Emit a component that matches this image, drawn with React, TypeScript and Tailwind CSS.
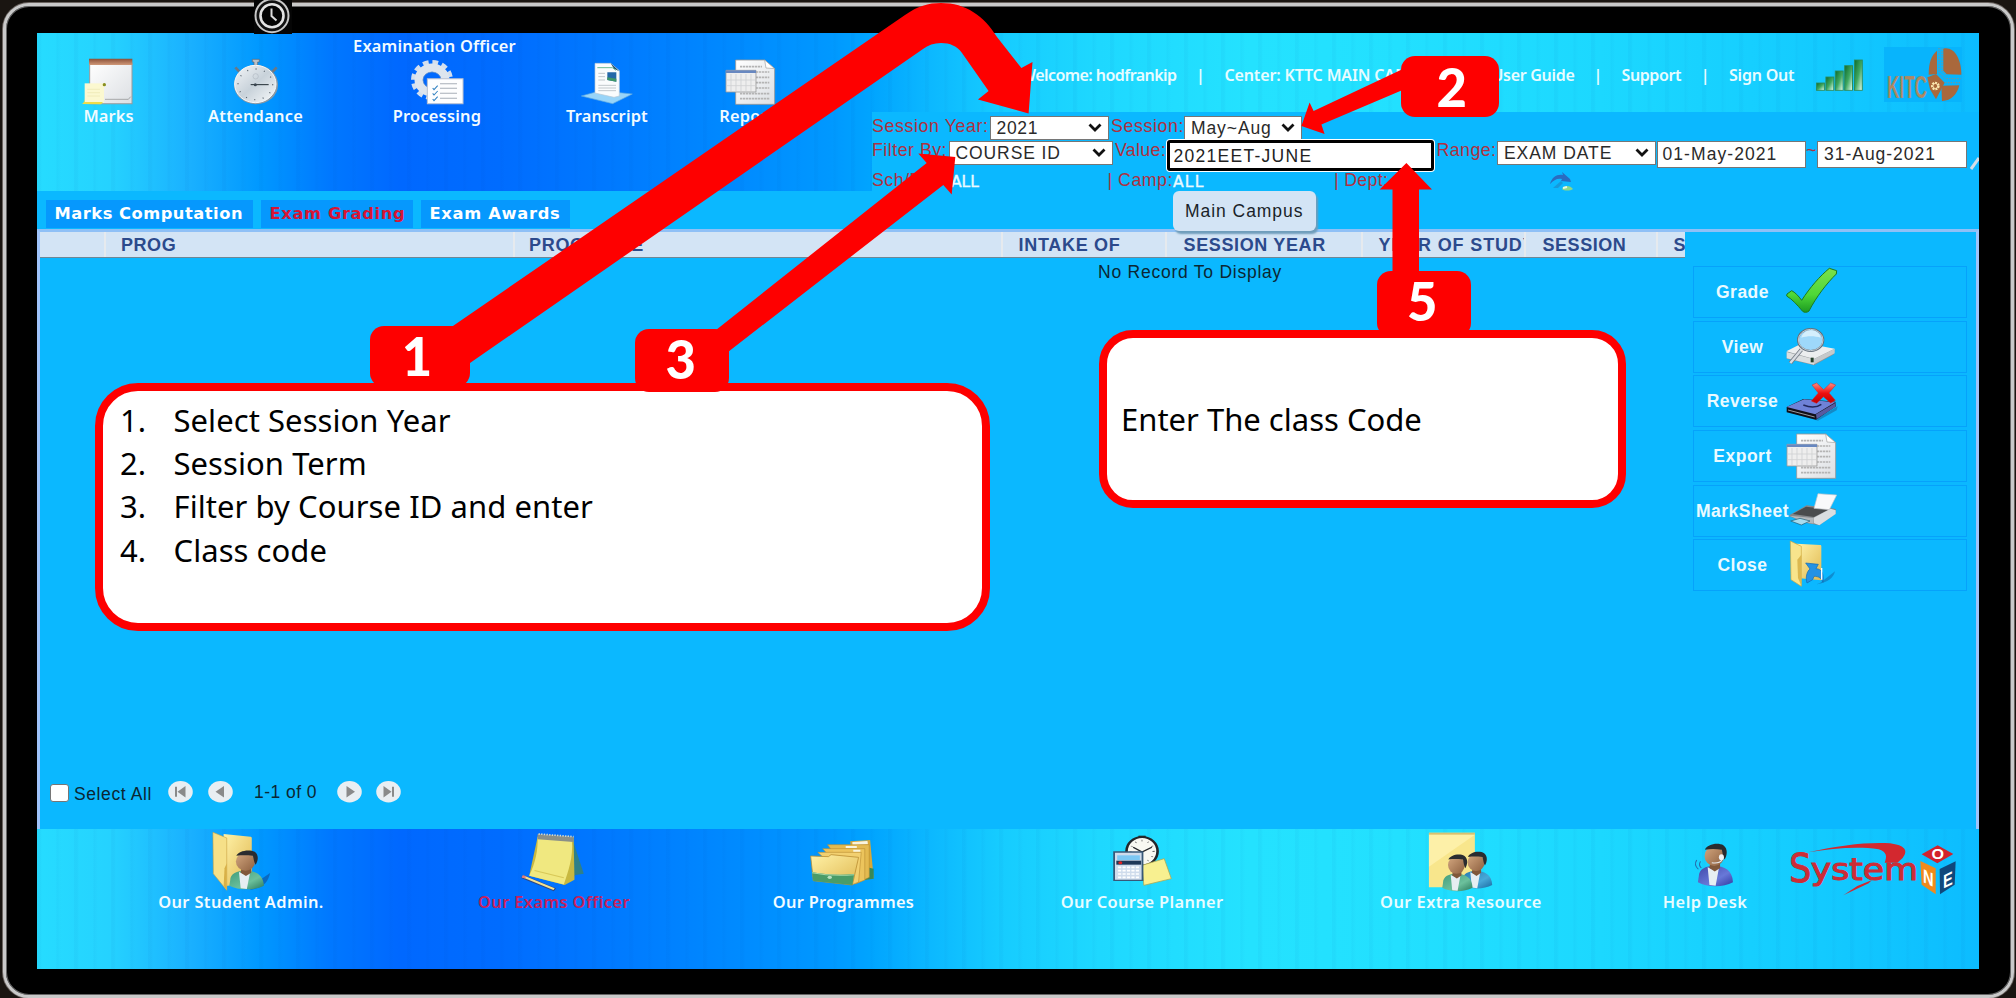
import React from "react";

const GRADIENT =
  "bg-[repeating-linear-gradient(90deg,rgba(0,60,160,0.035)_0px,rgba(0,60,160,0.035)_3px,transparent_5px,transparent_19px,rgba(0,60,160,0.03)_20px,transparent_24px,transparent_37px),linear-gradient(90deg,#26dcff_0%,#25d2ff_3.8%,#1ab0ff_7.9%,#0098ff_11.5%,#0078ff_15.1%,#0068ff_18.7%,#006cff_23.8%,#0078ff_29%,#0085ff_34.1%,#0098ff_40.8%,#00a4ff_42.9%,#0cb8ff_46%,#16ccff_49.6%,#1ed8ff_54.7%,#24e2ff_62.5%,#22e0ff_70.2%,#1cd8ff_80.5%,#14ccff_90.8%,#0cbcff_100%)]";

const NAV = "font-['Noto_Sans',sans-serif] font-semibold text-[16.4px] leading-[20px] whitespace-nowrap";
const ARIAL = "font-['Liberation_Sans',sans-serif] text-[17.5px] leading-[20px] whitespace-nowrap";
const HEAD = "font-['Liberation_Sans',sans-serif] text-[18px] leading-[20px] whitespace-nowrap font-bold text-[#2c4a8c]";
const LABEL = "font-['Liberation_Sans',sans-serif] text-[17.8px] leading-[20px] whitespace-nowrap text-[#b03040] shrink-0";

function Art({ box, w, h, children }: { box: string; w: number; h: number; children: React.ReactNode }) {
  return (
    <svg width={w} height={h} viewBox={box} preserveAspectRatio="none" className="block shrink-0">
      {children}
    </svg>
  );
}

function Defs() {
  return (
    <svg width="0" height="0" className="absolute">
      <defs>
        <linearGradient id="paper" x1="0" y1="0" x2="1" y2="1">
          <stop offset="0" stopColor="#ffffff" />
          <stop offset="1" stopColor="#dcdfe3" />
        </linearGradient>
        <linearGradient id="brown" x1="0" y1="0" x2="0" y2="1">
          <stop offset="0" stopColor="#8a5038" />
          <stop offset="1" stopColor="#d09878" />
        </linearGradient>
        <linearGradient id="folder" x1="0" y1="0" x2="1" y2="1">
          <stop offset="0" stopColor="#fff2a8" />
          <stop offset="1" stopColor="#e0b850" />
        </linearGradient>
        <linearGradient id="green" x1="0" y1="0" x2="0" y2="1">
          <stop offset="0" stopColor="#7be04a" />
          <stop offset="0.6" stopColor="#4ed838" />
          <stop offset="1" stopColor="#1c9a20" />
        </linearGradient>
        <linearGradient id="bars" x1="0" y1="0" x2="1" y2="1">
          <stop offset="0" stopColor="#0d6b2c" />
          <stop offset="0.5" stopColor="#3fa860" />
          <stop offset="1" stopColor="#e8fff0" />
        </linearGradient>
        <linearGradient id="red" x1="0" y1="0" x2="0" y2="1">
          <stop offset="0" stopColor="#ff8a80" />
          <stop offset="0.5" stopColor="#ee1010" />
          <stop offset="1" stopColor="#c00000" />
        </linearGradient>
        <linearGradient id="skin" x1="0" y1="0" x2="1" y2="1">
          <stop offset="0" stopColor="#d4a880" />
          <stop offset="1" stopColor="#8d6040" />
        </linearGradient>
        <linearGradient id="shirtGreen" x1="0" y1="0" x2="1" y2="1">
          <stop offset="0" stopColor="#3f9c7c" />
          <stop offset="0.6" stopColor="#6cc09c" />
          <stop offset="1" stopColor="#2a7a5c" />
        </linearGradient>
        <linearGradient id="shirtBlue" x1="0" y1="0" x2="1" y2="1">
          <stop offset="0" stopColor="#2478b0" />
          <stop offset="0.6" stopColor="#48a8d8" />
          <stop offset="1" stopColor="#1868a0" />
        </linearGradient>
        <linearGradient id="shirtViolet" x1="0" y1="0" x2="1" y2="1">
          <stop offset="0" stopColor="#4048a8" />
          <stop offset="0.6" stopColor="#6878d8" />
          <stop offset="1" stopColor="#3038a0" />
        </linearGradient>
        <linearGradient id="steel" x1="0" y1="0" x2="1" y2="1">
          <stop offset="0" stopColor="#f4f6f8" />
          <stop offset="0.5" stopColor="#c8d2da" />
          <stop offset="1" stopColor="#f8fafb" />
        </linearGradient>
      </defs>
    </svg>
  );
}

const MarksIcon = () => (
  <Art box="240 174 170 144" w={56.7} h={48}>
    <path d="M269 190H396V311H269Z" fill="url(#paper)" stroke="#9a9a9a" strokeWidth="3" />
    <path d="M267 176H397V195H267Z" fill="url(#brown)" />
    <path d="M315 298H385L392 290" fill="none" stroke="#8a8a8a" strokeWidth="2" />
    <path d="M254 250H312V308H254Z" fill="#fbf8d0" />
    <path d="M246 312C250 310 253 304 254 296L254 306H308C307 311 304 313 300 313Z" fill="#f0dc48" />
    <circle cx="313" cy="254" r="5" fill="#8a9020" />
    <path d="M262 268H300M262 278H300M262 288H300" stroke="#ebe6b0" strokeWidth="2" />
  </Art>
);

const WatchIcon = () => (
  <Art box="688 174 156 144" w={52} h={48}>
    <path d="M704 202L716 215M828 202L815 216" stroke="#6a7886" strokeWidth="8" />
    <path d="M755 178H776V186H771V196H760V186H755Z" fill="#b8c0c8" stroke="#5a6672" strokeWidth="2" />
    <ellipse cx="766" cy="254" rx="66" ry="59" fill="#8c99a4" />
    <ellipse cx="764" cy="252" rx="62" ry="56" fill="url(#steel)" stroke="#f5f8fa" strokeWidth="3" />
    <ellipse cx="764" cy="253" rx="52" ry="46" fill="none" stroke="#55606a" strokeWidth="4" strokeDasharray="3 22.6" />
    <path d="M750 254H804" stroke="#222c34" strokeWidth="3" />
    <circle cx="764" cy="254" r="4.5" fill="#3a4650" />
    <ellipse cx="765" cy="229" rx="8" ry="8" fill="none" stroke="#b0bac2" strokeWidth="2" />
  </Art>
);

const GearIcon = () => (
  <Art box="1225 174 170 144" w={56.7} h={48}>
    <ellipse cx="1294" cy="240" rx="56" ry="53" fill="none" stroke="#d3dfee" strokeWidth="14" strokeDasharray="17 11.5" />
    <ellipse cx="1294" cy="240" rx="40" ry="37" fill="none" stroke="#dde5ee" strokeWidth="25" />
    <ellipse cx="1294" cy="240" rx="27" ry="24" fill="none" stroke="#7898c0" strokeWidth="2" />
    <path d="M1280 236H1387V311H1280Z" fill="#fdfdfe" stroke="#b8c0d0" strokeWidth="3" />
    <path d="M1318 251H1369M1318 265H1369M1318 280H1369M1318 295H1369" stroke="#a8aeb8" strokeWidth="3" />
    <path d="M1296 264L1300 269L1311 257M1296 280L1300 285L1311 273M1296 297L1300 302L1311 290" fill="none" stroke="#3080c0" strokeWidth="3" />
  </Art>
);

const TranscriptIcon = () => (
  <Art box="238 174 162 144" w={54} h={48}>
    <path d="M242 288L300 272L395 282L336 311Z" fill="#98d4f8" stroke="#5aa8e0" strokeWidth="2" />
    <path d="M283 190H330L356 212V288L340 292L283 279Z" fill="#fafcfd" stroke="#b8c8d4" strokeWidth="2" />
    <path d="M330 190L356 214L340 206Z" fill="#1c4c68" />
    <path d="M290 203H335L346 211" stroke="#68b890" strokeWidth="3" fill="none" />
    <path d="M320 217H347V245L320 240Z" fill="#2468a8" />
    <path d="M320 232L347 236V245L320 240Z" fill="#3f9868" />
    <path d="M293 220H313M293 230H313M293 240H313M293 256H346M293 264H346M293 272H346" stroke="#c2c8cc" strokeWidth="3" />
  </Art>
);

const ReportIcon = () => (
  <Art box="674 174 160 144" w={53.3} h={48}>
    <path d="M709 180H796L826 206V313H709Z" fill="url(#paper)" stroke="#989898" strokeWidth="2.5" />
    <path d="M796 180L800 204L826 206Z" fill="#ffffff" stroke="#a0a0a0" strokeWidth="2" />
    <path d="M722 200H788M770 216H810M770 232H810M770 248H810M770 264H810M722 281H810M722 296H810" stroke="#b4b4b4" strokeWidth="5" strokeDasharray="7 2" />
    <path d="M680 211H770V276H680Z" fill="#eeeeee" stroke="#9a9a9a" strokeWidth="2.5" />
    <path d="M680 211H770V219H680Z" fill="#6888c0" />
    <path d="M695 222V274M710 222V274M725 222V274M740 222V274M755 222V274M682 240H768M682 257H768" stroke="#cfd1d3" strokeWidth="2.5" />
  </Art>
);

const SignalIcon = () => (
  <Art box="1058 174 128 102" w={50} h={34}>
    {[
      [1062, 249],
      [1086, 231],
      [1110, 213],
      [1134, 197],
      [1159, 180],
    ].map(([x, y]) => (
      <rect key={x} x={x} y={y} width="20" height={271 - y} fill="url(#bars)" stroke="#2b8a5c" strokeWidth="2.5" />
    ))}
  </Art>
);

const CollegeLogo = () => (
  <Art box="134 51 234 166" w={78} h={55.3}>
    <path d="M134 51H368V217H134Z" fill="#08b4fc" />
    <path d="M293 62V132L268 134C268 98 276 76 293 62Z" fill="#a9683c" />
    <path d="M312 56C342 48 366 84 366 134L322 133L312 122Z" fill="#a9683c" />
    <path d="M306 167L360 166C354 192 336 213 308 213Z" fill="#a9683c" />
    <path d="M264 142L290 132L316 158L290 208L272 178Z" fill="#a9683c" />
    <path d="M299 54V128L318 146H364M308 56V124L322 138" fill="none" stroke="#8a8f88" strokeWidth="3" strokeDasharray="4 4" />
    <path d="M318 158H362" stroke="#8a8f88" strokeWidth="3" strokeDasharray="4 4" />
    <circle cx="288" cy="168" r="10" fill="none" stroke="#fbe8b0" strokeWidth="6" strokeDasharray="6 3" />
    <circle cx="288" cy="168" r="7.5" fill="none" stroke="#fbe8b0" strokeWidth="3" />
    <text x="143" y="205" fontFamily="Liberation Sans, sans-serif" fontWeight="700" fontSize="92" textLength="120" lengthAdjust="spacingAndGlyphs" fill="#b08860" stroke="#3fa8c8" strokeWidth="2" strokeDasharray="4 4">
      KITC
    </text>
  </Art>
);

const CheckIcon = () => (
  <Art box="372 48 168 156" w={56} h={52}>
    <path d="M381 132L395 122C405 127 415 137 425 151C450 112 480 78 508 55L530 62L529 72C500 100 468 142 447 183C442 188 432 188 428 184C412 165 397 148 380 138Z" fill="url(#green)" stroke="#1c7a20" strokeWidth="3" />
  </Art>
);

const ViewIcon = () => (
  <Art box="372 212 168 156" w={56} h={52}>
    <path d="M380 305L425 278L523 297L522 312L462 345L380 325Z" fill="#8d9296" />
    <path d="M379 303L430 277L524 295L462 326Z" fill="#eceeef" />
    <path d="M462 326L524 295V309L462 342Z" fill="#c6c9cb" />
    <path d="M380 305L462 327V343L380 324Z" fill="#dcdfe0" />
    <rect x="452" y="322" width="9" height="14" fill="#24402c" />
    <path d="M424 298L391 338" stroke="#727a84" strokeWidth="12" />
    <path d="M424 298L391 338" stroke="#d8dce2" strokeWidth="7" />
    <ellipse cx="452" cy="269" rx="38" ry="33" fill="#9ed8fa" stroke="#64707c" strokeWidth="6" />
    <ellipse cx="452" cy="269" rx="37" ry="32" fill="none" stroke="#d8e0e6" strokeWidth="2.5" />
    <path d="M424 262C440 256 465 256 482 262C480 248 466 240 452 240C438 240 427 250 424 262Z" fill="#d4effd" />
  </Art>
);

const ReverseIcon = () => (
  <Art box="372 376 168 156" w={56} h={52}>
    <path d="M382 486L470 508L533 470L530 482L474 513Z" fill="#1a6aa0" opacity="0.6" />
    <path d="M380 472L430 448L526 456L528 470L468 510L380 488Z" fill="#101018" />
    <path d="M380 472L432 449L526 458L466 494Z" fill="#6f82d8" />
    <path d="M468 494L527 459V471L470 508Z" fill="#585aa0" />
    <path d="M384 481L464 502" stroke="#98989c" strokeWidth="3" />
    <path d="M430 466C450 474 470 474 484 464" stroke="#20285c" strokeWidth="5" fill="none" />
    <path d="M456 406L470 400L491 420L512 400L527 406L507 430L526 452L512 460L490 441L470 461L454 454L475 430Z" fill="url(#red)" stroke="#d82020" strokeWidth="1.5" />
  </Art>
);

const PrinterIcon = () => (
  <Art box="372 704 168 156" w={56} h={52}>
    <path d="M386 797L440 766L527 776V790L478 825L440 818Z" fill="#7c8084" />
    <path d="M388 795L440 765L526 776L474 812Z" fill="#85888c" />
    <path d="M398 791L438 769L508 777L462 800Z" fill="#4a4c4e" />
    <path d="M462 774L474 730L530 734L508 778Z" fill="#f8f9fb" stroke="#c0c4c8" strokeWidth="2" />
    <path d="M461 802L512 775L527 780V791L478 825L462 819Z" fill="#dadde0" />
    <path d="M388 796L461 803V820L438 817Z" fill="#b4b8bc" />
    <path d="M392 812L420 804L450 812L424 824Z" fill="#a8dcee" stroke="#205870" strokeWidth="2" />
  </Art>
);

const CloseIcon = () => (
  <Art box="372 868 168 156" w={56} h={52}>
    <path d="M480 1000L525 965C520 985 505 998 470 1004Z" fill="#1270b0" opacity="0.6" />
    <path d="M410 882L481 886C483 886 484 888 484 890V992L412 985Z" fill="url(#folder)" />
    <path d="M391 874L424 890V1010L393 990Z" fill="#f8e48c" stroke="#cfa840" strokeWidth="2" />
    <path d="M412 930L424 915V1008L414 985Z" fill="#dcb850" />
    <path d="M437 940L475 944L468 957C485 958 492 970 489 998C484 985 476 980 462 980L458 990L441 1000C436 985 440 965 450 958Z" fill="#2492e4" stroke="#1068b4" strokeWidth="2" />
    <path d="M485 955V990" stroke="#ffffff" strokeWidth="4" />
  </Art>
);

function Head({ x, y, s, shirt }: { x: number; y: number; s: number; shirt: string }) {
  return (
    <g transform={`translate(${x} ${y}) scale(${s})`}>
      <path d="M-34 92C-34 70 -18 62 0 62C24 62 42 74 43 108C20 124 -16 122 -36 108Z" fill={shirt} />
      <path d="M-14 66L0 74L12 64L4 118L-10 116Z" fill="#e6eef2" />
      <path d="M-8 50H14V68L2 78L-10 68Z" fill="#80583a" />
      <ellipse cx="1" cy="34" rx="22" ry="28" fill="url(#skin)" />
      <path d="M-20 16C-16 2 8 -6 22 4C32 14 30 32 24 44C20 34 20 28 18 16C4 14 -8 14 -20 16Z" fill="#2a2c30" />
    </g>
  );
}

const StudentIcon = () => (
  <Art box="465 270 150 190" w={67} h={63}>
    <path d="M560 440L604 400C600 425 590 445 560 450Z" fill="#104c98" opacity="0.6" />
    <path d="M500 282L560 290C562 290 563 292 563 294V430L500 440Z" fill="url(#folder)" />
    <path d="M476 277L507 294V452L477 402Z" fill="#f6e088" stroke="#c8a040" strokeWidth="1.5" />
    <path d="M502 385L507 370V452L500 438Z" fill="#d8b048" />
    <Head x={548} y={332} s={0.98} shirt="url(#shirtGreen)" />
  </Art>
);

const NotepadIcon = () => (
  <Art box="1161 270 160 190" w={71} h={63}>
    <path d="M1280 292L1307 402L1288 406L1262 436Z" fill="#2f8088" />
    <path d="M1204 284L1284 292L1286 420L1264 436L1184 408Z" fill="#c8b840" />
    <path d="M1203 292L1280 300C1284 350 1272 395 1262 434L1184 408C1198 370 1204 330 1203 292Z" fill="#f0e880" />
    <path d="M1203 282L1284 290V306L1203 298Z" fill="#8a9088" />
    <path d="M1205 282L1284 290" stroke="#d8dcd0" strokeWidth="5" strokeDasharray="3 3" />
    <path d="M1196 392L1262 414" stroke="#d8c858" strokeWidth="3" />
    <path d="M1168 410L1242 450" stroke="#2c4888" strokeWidth="10" />
    <path d="M1170 410L1240 448" stroke="#f2e090" strokeWidth="6" />
    <path d="M1168 410L1176 413" stroke="#e08080" strokeWidth="7" />
  </Art>
);

const ProgrammesIcon = () => (
  <Art box="240 90 160 186" w={71} h={62}>
    <path d="M335 124L380 120L388 234L345 246Z" fill="#d8a838" />
    <path d="M368 200L388 206V236L368 240Z" fill="#388858" />
    <path d="M340 126L374 123L375 133L340 136Z" fill="#f8f4e0" />
    <path d="M284 134H378V232L350 250Z" fill="#e4ba50" stroke="#b88c30" strokeWidth="1.5" />
    <path d="M273 146H368V240L345 252Z" fill="#ecc45c" stroke="#b88c30" strokeWidth="1.5" />
    <path d="M262 157H360L354 246L340 254Z" fill="#f2d070" stroke="#b88c30" strokeWidth="1.5" />
    <path d="M246 168L286 170L292 164L354 172L340 255L252 242Z" fill="url(#folder)" stroke="#b88c30" strokeWidth="2" />
    <path d="M249 216C280 224 310 226 344 222L340 255L252 243Z" fill="#4a9c68" />
    <path d="M249 218C280 226 310 228 344 224" stroke="#a8d8a8" strokeWidth="3" fill="none" />
    <circle cx="289" cy="232" r="5" fill="#b8e0c0" />
    <path d="M325 141H350M342 152H358" stroke="#f8f4e0" strokeWidth="6" />
  </Art>
);

const PlannerIcon = () => (
  <Art box="920 90 142 186" w={63} h={62}>
    <ellipse cx="990" cy="154" rx="35" ry="43" fill="#f8f8f2" stroke="#24262a" strokeWidth="6" />
    <path d="M982 110H998" stroke="#24262a" strokeWidth="6" />
    <ellipse cx="990" cy="154" rx="26" ry="32" fill="none" stroke="#6a6a6a" strokeWidth="5" strokeDasharray="2 13" />
    <path d="M970 142L990 156L1012 142" stroke="#24262a" strokeWidth="3.5" fill="none" />
    <path d="M990 196L1040 176L1056 236L994 256Z" fill="#f8f090" stroke="#b0a850" strokeWidth="2" />
    <path d="M927 156H991V241H927Z" fill="#cfdcec" stroke="#385878" strokeWidth="4" />
    <path d="M934 166H985V180H934Z" fill="#7cc8f4" />
    <path d="M932 182H988V194H932Z" fill="#1e3858" />
    <circle cx="941" cy="188" r="4.5" fill="#e02020" />
    <path d="M936 202H984M936 212H984M936 222H984M936 232H984" stroke="#ffffff" strokeWidth="5" strokeDasharray="7 3" />
  </Art>
);

const ResourceIcon = () => (
  <Art box="157 90 170 186" w={71} h={62}>
    <path d="M164 98H274V262H164Z" fill="#f8e68c" />
    <path d="M164 98H274V104H164Z" fill="#d8c070" />
    <path d="M164 104L274 104L164 200Z" fill="#fff4b4" opacity="0.7" />
    <Head x={276} y={156} s={0.92} shirt="url(#shirtBlue)" />
    <Head x={229} y={164} s={0.92} shirt="url(#shirtGreen)" />
  </Art>
);

const HelpIcon = () => (
  <Art box="743 90 160 186" w={67} h={62}>
    <Head x={843} y={132} s={1.06} shirt="url(#shirtViolet)" />
    <ellipse cx="861" cy="172" rx="6" ry="9" fill="#f2f4f6" />
    <path d="M862 180C858 188 850 190 838 188" stroke="#e8eaec" strokeWidth="3" fill="none" />
    <path d="M811 184C808 190 808 198 813 204M802 180C797 190 799 200 806 208" stroke="#2868a8" strokeWidth="2.5" fill="none" />
  </Art>
);

const SystemOneLogo = () => (
  <Art box="0 0 570 240" w={190} h={80}>
    <path d="M84 67C180 46 260 36 330 40C375 46 386 62 368 84L352 98H314C322 78 320 66 296 58C230 48 160 56 84 67Z" fill="#d3282f" />
    <path d="M276 150L232 168L190 196L266 160Z" fill="#d3282f" />
    <text x="28" y="157" fontFamily="DejaVu Sans, sans-serif" fontSize="116" fill="#cd2c36" stroke="#cd2c36" strokeWidth="3" textLength="66" lengthAdjust="spacingAndGlyphs">
      S
    </text>
    <text x="92" y="150" fontFamily="DejaVu Sans, sans-serif" fontSize="88" fill="#cd2c36" stroke="#cd2c36" strokeWidth="3" textLength="322" lengthAdjust="spacingAndGlyphs">
      ystem
    </text>
    <path d="M473 46L520 72L472 100L425 73Z" fill="#d3222c" />
    <path d="M421 93L467 115V193L425 164Z" fill="#f08a1c" />
    <path d="M479 117L527 94L524 164L480 193Z" fill="#10487c" />
    <ellipse cx="473" cy="73" rx="24" ry="17" fill="#d3222c" />
    <text transform="matrix(1.15 0 0 1 473 88)" textAnchor="middle" fontFamily="Liberation Sans, sans-serif" fontWeight="700" fontSize="42" fill="#fff">
      O
    </text>
    <text transform="matrix(1 .46 0 1.3 429 156)" fontFamily="Liberation Sans, sans-serif" fontWeight="700" fontSize="44" fill="#fff">
      N
    </text>
    <text transform="matrix(1 -.48 0 1.3 489 176)" fontFamily="Liberation Sans, sans-serif" fontWeight="700" fontSize="44" fill="#fff">
      E
    </text>
  </Art>
);

function Chevron() {
  return (
    <svg width="14" height="9" viewBox="0 0 14 9" className="mr-[6px] shrink-0">
      <path d="M1.5 1.5L7 7L12.5 1.5" fill="none" stroke="#111" strokeWidth="2.8" />
    </svg>
  );
}

function Select({ text, className }: { text: string; className: string }) {
  return (
    <div className={`flex shrink-0 items-center justify-between border border-[#767676] bg-white pl-[6px] text-[#2a2a2a] ${ARIAL} ${className}`}>
      <span>{text}</span>
      <Chevron />
    </div>
  );
}

function NavItem({ title, label, className, children }: { title?: string; label: string; className: string; children: React.ReactNode }) {
  return (
    <div className={`flex shrink-0 flex-col items-center text-[#f2fbff] ${NAV} ${className}`}>
      <div className="h-[25.5px] pt-[3.5px] tracking-[0.2px] -ml-[5px]">{title}</div>
      <div className="h-[47.5px]">{children}</div>
      <span>{label}</span>
    </div>
  );
}

function Bar({ className }: { className: string }) {
  return <span className={`shrink-0 text-center ${className}`}>|</span>;
}

function Header() {
  return (
    <header className={`flex h-[158.5px] shrink-0 ${GRADIENT}`}>
      <nav className="flex w-[835px] shrink-0">
        <NavItem label="Marks" className="w-[143px] tracking-[0.1px]"><MarksIcon /></NavItem>
        <NavItem label="Attendance" className="w-[151px] tracking-[0.25px]"><WatchIcon /></NavItem>
        <NavItem title="Examination Officer" label="Processing" className="w-[212px] tracking-[0.2px]"><GearIcon /></NavItem>
        <NavItem label="Transcript" className="w-[128px] tracking-[0.15px]"><TranscriptIcon /></NavItem>
        <NavItem label="Reports" className="w-[160px] tracking-[0.15px]"><ReportIcon /></NavItem>
      </nav>
      <div className="flex min-w-0 grow flex-col">
        <div className={`flex h-[79.5px] shrink-0 pt-[14px] text-[#e8fcff] ${NAV}`}>
          <div className="flex pt-[18px] text-[16px]">
            <span className="w-[304.5px] text-right tracking-[-0.55px]">Welcome: hodfrankip</span>
            <Bar className="w-[48px]" />
            <span className="w-[216px] tracking-[-0.15px]">Center: KTTC MAIN CAMPUS</span>
            <Bar className="w-[47px]" />
            <span className="w-[87px] text-right tracking-[-0.3px]">User Guide</span>
            <Bar className="w-[47px]" />
            <span className="w-[60px] tracking-[-0.4px]">Support</span>
            <Bar className="w-[47.5px]" />
            <span className="w-[66px] tracking-[-0.2px]">Sign Out</span>
          </div>
          <div className="ml-[20px] mt-[11.5px]"><SignalIcon /></div>
          <div className="ml-[19px]"><CollegeLogo /></div>
        </div>
        <div className="flex h-[79px] flex-col overflow-hidden bg-[#0bb8ff]">
          <div className="flex h-[28px] shrink-0">
            <span className={`w-[117.5px] pt-[3.5px] tracking-[0.61px] ${LABEL}`}>Session Year:</span>
            <Select text="2021" className="mt-[3.5px] h-[24px] w-[119.5px] tracking-[0.7px]" />
            <span className={`w-[75px] pl-[2px] pt-[3.5px] tracking-[0.6px] ${LABEL}`}>Session:</span>
            <Select text="May~Aug" className="mt-[3.5px] h-[24px] w-[117.5px] tracking-[0.9px]" />
          </div>
          <div className="flex h-[31px] shrink-0">
            <span className={`w-[76.5px] tracking-[0.49px] ${LABEL}`}>Filter By:</span>
            <Select text="COURSE ID" className="mt-[0.5px] h-[24px] w-[164.5px] tracking-[0.9px]" />
            <span className={`w-[54px] pl-[2px] tracking-[0.3px] ${LABEL}`}>Value:</span>
            <div className={`mr-[1.5px] flex w-[267px] shrink-0 items-center rounded-[3px] border-[3px] border-black bg-white pl-[3.5px] tracking-[1.28px] text-[#222] shadow-[0_0_0_1px_#fff] ${ARIAL}`}>
              2021EET-JUNE
            </div>
            <span className={`w-[61.5px] pl-[1px] tracking-[0.44px] ${LABEL}`}>Range:</span>
            <Select text="EXAM DATE" className="mt-[0.5px] h-[24px] w-[158.5px] tracking-[0.95px]" />
            <div className={`ml-[1px] mt-[0.5px] flex h-[27px] w-[149.5px] shrink-0 items-center border border-[#767676] bg-white pl-[5px] tracking-[1.07px] text-[#2a2a2a] ${ARIAL}`}>
              01-May-2021
            </div>
            <span className={`w-[11px] ${LABEL}`}>~</span>
            <div className={`mt-[0.5px] flex h-[27px] w-[150px] shrink-0 items-center border border-[#767676] bg-white pl-[6px] tracking-[0.98px] text-[#2a2a2a] ${ARIAL}`}>
              31-Aug-2021
            </div>
            <svg width="12" height="31" viewBox="0 0 12 31" className="shrink-0">
              <path d="M4 29L12 18" stroke="#d4dde6" strokeWidth="3" />
            </svg>
          </div>
          <div className="flex h-[20px] shrink-0">
            <span className={`w-[79px] -mt-[1px] tracking-[0.5px] ${LABEL}`}>Sch/Div:</span>
            <span className="w-[156.5px] pt-[1px] font-['DejaVu_Sans',sans-serif] text-[15.5px] leading-[20px] text-[#eafaff] [-webkit-text-stroke:0.4px_#eafaff]">ALL</span>
            <span className={`w-[65.5px] -mt-[1px] tracking-[0.5px] ${LABEL}`}>| Camp:</span>
            <span className="w-[161px] pt-[1px] font-['DejaVu_Sans',sans-serif] text-[15.5px] leading-[20px] tracking-[1.2px] text-[#eafaff] [-webkit-text-stroke:0.4px_#eafaff]">ALL</span>
            <span className={`w-[56px] -mt-[1px] tracking-[0.3px] ${LABEL}`}>| Dept:</span>
            <span className="w-[158px] pt-[1px] font-['DejaVu_Sans',sans-serif] text-[15.5px] leading-[20px] tracking-[1.2px] text-[#eafaff]">ALL</span>
            <svg width="26" height="20" viewBox="0 0 26 20" className="shrink-0">
              <path d="M2 13C4 6 9 3 15 4L14 1L22 8L23 11L13 10L14 8C9 7 6 9 2 13Z" fill="#2a6cc0" />
              <path d="M5 17L13 10L15 12L10 17Z" fill="#1c8ccc" opacity="0.7" />
              <path d="M14 18C16 14 22 14 25 18C22 20 16 20 14 18Z" fill="#8cd888" />
              <path d="M15 17L19 16" stroke="#e8f8e0" strokeWidth="2" />
            </svg>
          </div>
        </div>
      </div>
    </header>
  );
}

function Tab({ text, className }: { text: string; className: string }) {
  return (
    <div className={`flex h-[28px] items-center bg-[#0698fd] pl-[8.5px] pt-px font-['DejaVu_Sans',sans-serif] text-[16.3px] font-bold whitespace-nowrap ${className}`}>
      {text}
    </div>
  );
}

function HeadCell({ text, className }: { text: string; className: string }) {
  return <div className={`shrink-0 overflow-hidden border-r-2 border-[#e6eaee] pt-[3px] ${HEAD} ${className}`}>{text}</div>;
}

function PageButton({ d, className }: { d: string; className: string }) {
  return (
    <svg width="25" height="21.5" viewBox="0 0 25 21" preserveAspectRatio="none" className={`shrink-0 ${className}`}>
      <ellipse cx="12.5" cy="10.5" rx="12.3" ry="10.4" fill="#e9eef2" />
      <path d={d} fill="#8a8a8a" />
    </svg>
  );
}

const ACTIONS = [
  { label: "Grade", icon: <CheckIcon /> },
  { label: "View", icon: <ViewIcon /> },
  { label: "Reverse", icon: <ReverseIcon /> },
  {
    label: "Export",
    icon: (
      <div className="pl-px">
        <ReportIcon />
      </div>
    ),
  },
  { label: "MarkSheet", icon: <PrinterIcon /> },
  { label: "Close", icon: <CloseIcon /> },
];

function Main() {
  return (
    <main className="flex min-h-0 grow flex-col bg-[#0bb8ff]">
      <div className="flex h-[38px] shrink-0 gap-[8px] pl-[9px] pt-[9px]">
        <Tab text="Marks Computation" className="w-[207px] tracking-[0.52px] text-white" />
        <Tab text="Exam Grading" className="w-[152px] tracking-[0.64px] text-[#d81434]" />
        <Tab text="Exam Awards" className="w-[149px] tracking-[0.7px] text-white" />
      </div>
      <div className="flex min-h-0 grow border-x-[3px] border-t-[3px] border-x-[#a0c4fb] border-t-[#8fc0f6]">
        <section className="flex w-[1645px] shrink-0 flex-col">
          <div className="flex h-[26px] shrink-0 overflow-hidden border-b border-[#6f8796] bg-[#d3e4f5]">
            <HeadCell text="" className="w-[65.5px]" />
            <HeadCell text="PROG" className="w-[409px] pl-[15.5px] tracking-[0.55px]" />
            <HeadCell text="PROG TITLE" className="w-[488.5px] pl-[14.5px] tracking-[0.7px]" />
            <HeadCell text="INTAKE OF" className="w-[164px] pl-[15.5px] tracking-[0.7px]" />
            <HeadCell text="SESSION YEAR" className="w-[196px] pl-[16.5px] tracking-[0.63px]" />
            <HeadCell text="YEAR OF STUDY" className="w-[162.5px] pl-[15.5px] tracking-[0.85px]" />
            <HeadCell text="SESSION" className="w-[132px] pl-[17px] tracking-[0.55px]" />
            <div className={`pl-[16px] pt-[3px] ${HEAD}`}>S</div>
          </div>
          <div className={`pl-[1058px] pt-[4px] tracking-[0.76px] text-[#0b2733] ${ARIAL}`}>No Record To Display</div>
          <div className={`mt-auto flex h-[52px] shrink-0 pl-[10px] text-[#0b2733] ${ARIAL}`}>
            <span className="mt-[7px] h-[17.5px] w-[19px] shrink-0 rounded-[3px] border-[1.5px] border-[#767676] bg-white" />
            <span className="w-[94px] pl-[5px] pt-[7px] tracking-[0.6px]">Select All</span>
            <PageButton className="mt-[4px] ml-[5px]" d="M7 5.5H9V15.5H7ZM17.5 5V16L9.5 10.5Z" />
            <PageButton className="mt-[4px] ml-[15px]" d="M16 5V16L7.5 10.5Z" />
            <span className="ml-[21px] w-[83px] pt-[5px] tracking-[0.45px]">1-1 of 0</span>
            <PageButton className="mt-[4px]" d="M9.5 5V16L18 10.5Z" />
            <PageButton className="mt-[4px] ml-[14px]" d="M7.5 5V16L15.5 10.5ZM16 5.5H18V15.5H16Z" />
          </div>
        </section>
        <aside className="flex flex-col gap-[2.67px] pl-[8px] pt-[34px]">
          {ACTIONS.map((a) => (
            <button key={a.label} className={`flex h-[52px] w-[274px] items-center border-[1.5px] border-[#06a2fb] font-bold tracking-[0.5px] text-[#eafaff] ${ARIAL}`}>
              <span className="w-[97px] shrink-0 text-center">{a.label}</span>
              <span className="-ml-[7px]">{a.icon}</span>
            </button>
          ))}
        </aside>
      </div>
    </main>
  );
}

function FootItem({ label, className, children }: { label: string; className: string; children: React.ReactNode }) {
  return (
    <div className={`flex shrink-0 flex-col items-center pt-[1px] ${NAV} ${className}`}>
      <div className="h-[62px]">{children}</div>
      <span>{label}</span>
    </div>
  );
}

function Footer() {
  return (
    <footer className={`flex h-[140px] shrink-0 ${GRADIENT}`}>
      <FootItem label="Our Student Admin." className="w-[408px] tracking-[0.38px] text-[#f2fbff]"><StudentIcon /></FootItem>
      <FootItem label="Our Exams Officer" className="w-[218px] tracking-[0.38px] text-[#c8205c]"><NotepadIcon /></FootItem>
      <FootItem label="Our Programmes" className="w-[361px] tracking-[0.28px] text-[#f2fbff]"><ProgrammesIcon /></FootItem>
      <FootItem label="Our Course Planner" className="w-[236px] tracking-[0.33px] text-[#e8fcff]"><PlannerIcon /></FootItem>
      <FootItem label="Our Extra Resource" className="w-[402px] tracking-[0.45px] text-[#e8fcff]"><ResourceIcon /></FootItem>
      <FootItem label="Help Desk" className="w-[86px] tracking-[0.45px] text-[#e8fcff]"><HelpIcon /></FootItem>
      <div className="ml-[32px] pt-[1px]"><SystemOneLogo /></div>
    </footer>
  );
}

function Badge({ n, className }: { n: string; className: string }) {
  return (
    <div className={`absolute flex justify-center rounded-[14px] bg-[#fe0000] font-['Lato',sans-serif] text-[52.5px] leading-[60px] font-black text-white ${className}`}>
      {n}
    </div>
  );
}

const STEPS = ["Select Session Year", "Session Term", "Filter by Course ID and enter", "Class code"];

function Annotations() {
  return (
    <>
      <div className="absolute left-[1173px] top-[191px] flex h-[40px] w-[142.5px] items-center justify-center rounded-[6px] bg-[#d3e4f5] shadow-[2px_3px_2px_#6f9dbb]">
        <span className={`tracking-[0.95px] text-[#1a1f28] ${ARIAL}`}>Main Campus</span>
      </div>
      <div className="absolute left-[95px] top-[383px] h-[248px] w-[895px] rounded-[43px] border-8 border-[#fe0000] bg-white pl-[17px] pt-[8px]">
        <ol className="font-['Noto_Sans',sans-serif] text-[31px] leading-[43.2px] tracking-[0.06px] text-black">
          {STEPS.map((s, i) => (
            <li key={s} className="flex">
              <span className="w-[53.5px]">{i + 1}.</span>
              <span>{s}</span>
            </li>
          ))}
        </ol>
      </div>
      <div className="absolute left-[1099px] top-[330px] flex h-[177.5px] w-[527px] items-center rounded-[34px] border-8 border-[#fe0000] bg-white pl-[14px] pt-px font-['Noto_Sans',sans-serif] text-[31px] text-black">
        Enter The class Code
      </div>
      <svg width="2016" height="998" viewBox="0 0 2016 998" className="absolute left-0 top-0" fill="#fe0000">
        <path d="M450 328L905 15C918 6 928 3 941 3C966 3 984 16 997 37L1021.4 68L1032.5 62L1028.6 113.5L978 99.5L988.6 91L962 53C957 46 950 43 941 43C934 43 928 45 923 49L470 363L455 370Z" />
        <path d="M716 330L926.7 163L918.3 153.5L955.3 157L951.7 194.5L943.3 185L728 352L715 360Z" />
        <path d="M1405 68L1313.6 111L1309.6 102.5L1301.4 126L1324.6 134L1321.4 124.5L1405 89Z" />
        <path d="M1406.4 163L1432 189.5H1419V275H1392.5V189.5H1379.6Z" />
      </svg>
      <Badge n="1" className="left-[370px] top-[326px] h-[61px] w-[100px] pr-[6px]" />
      <Badge n="3" className="left-[635px] top-[329px] h-[63px] w-[93.5px] pr-[2px]" />
      <Badge n="2" className="left-[1401px] top-[56px] h-[61px] w-[97.5px] pt-[1px] pl-[4px]" />
      <Badge n="5" className="left-[1376.5px] top-[271px] h-[66px] w-[94.5px] pr-[3px]" />
    </>
  );
}

function Clock() {
  return (
    <svg width="38" height="34" viewBox="0 0 38 34" className="absolute left-[254px] top-0">
      <rect width="38" height="34" fill="#050505" />
      <circle cx="18" cy="15.7" r="16.5" fill="#111" stroke="#c8c8c8" strokeWidth="2" />
      <circle cx="18" cy="15.7" r="11.5" fill="#050505" stroke="#e4e4e4" strokeWidth="2.6" />
      <path d="M17.5 8.5V16L22.5 20.5" fill="none" stroke="#dcdcdc" strokeWidth="2" />
    </svg>
  );
}

export default function App() {
  return (
    <div className="relative h-[998px] w-[2016px] overflow-hidden bg-[#1a1511] pl-[3px] pt-[3px]">
      <Defs />
      <div className="h-[995px] w-[2011px] rounded-[26px] border-[3px] border-[#c9c9c9] bg-black pl-[31px] pt-[26.5px] shadow-[0_0_0_1px_#6b6460,inset_0_0_0_1px_#666]">
        <div className="flex h-[936.5px] w-[1942px] flex-col">
          <Header />
          <Main />
          <Footer />
        </div>
      </div>
      <Clock />
      <Annotations />
    </div>
  );
}
